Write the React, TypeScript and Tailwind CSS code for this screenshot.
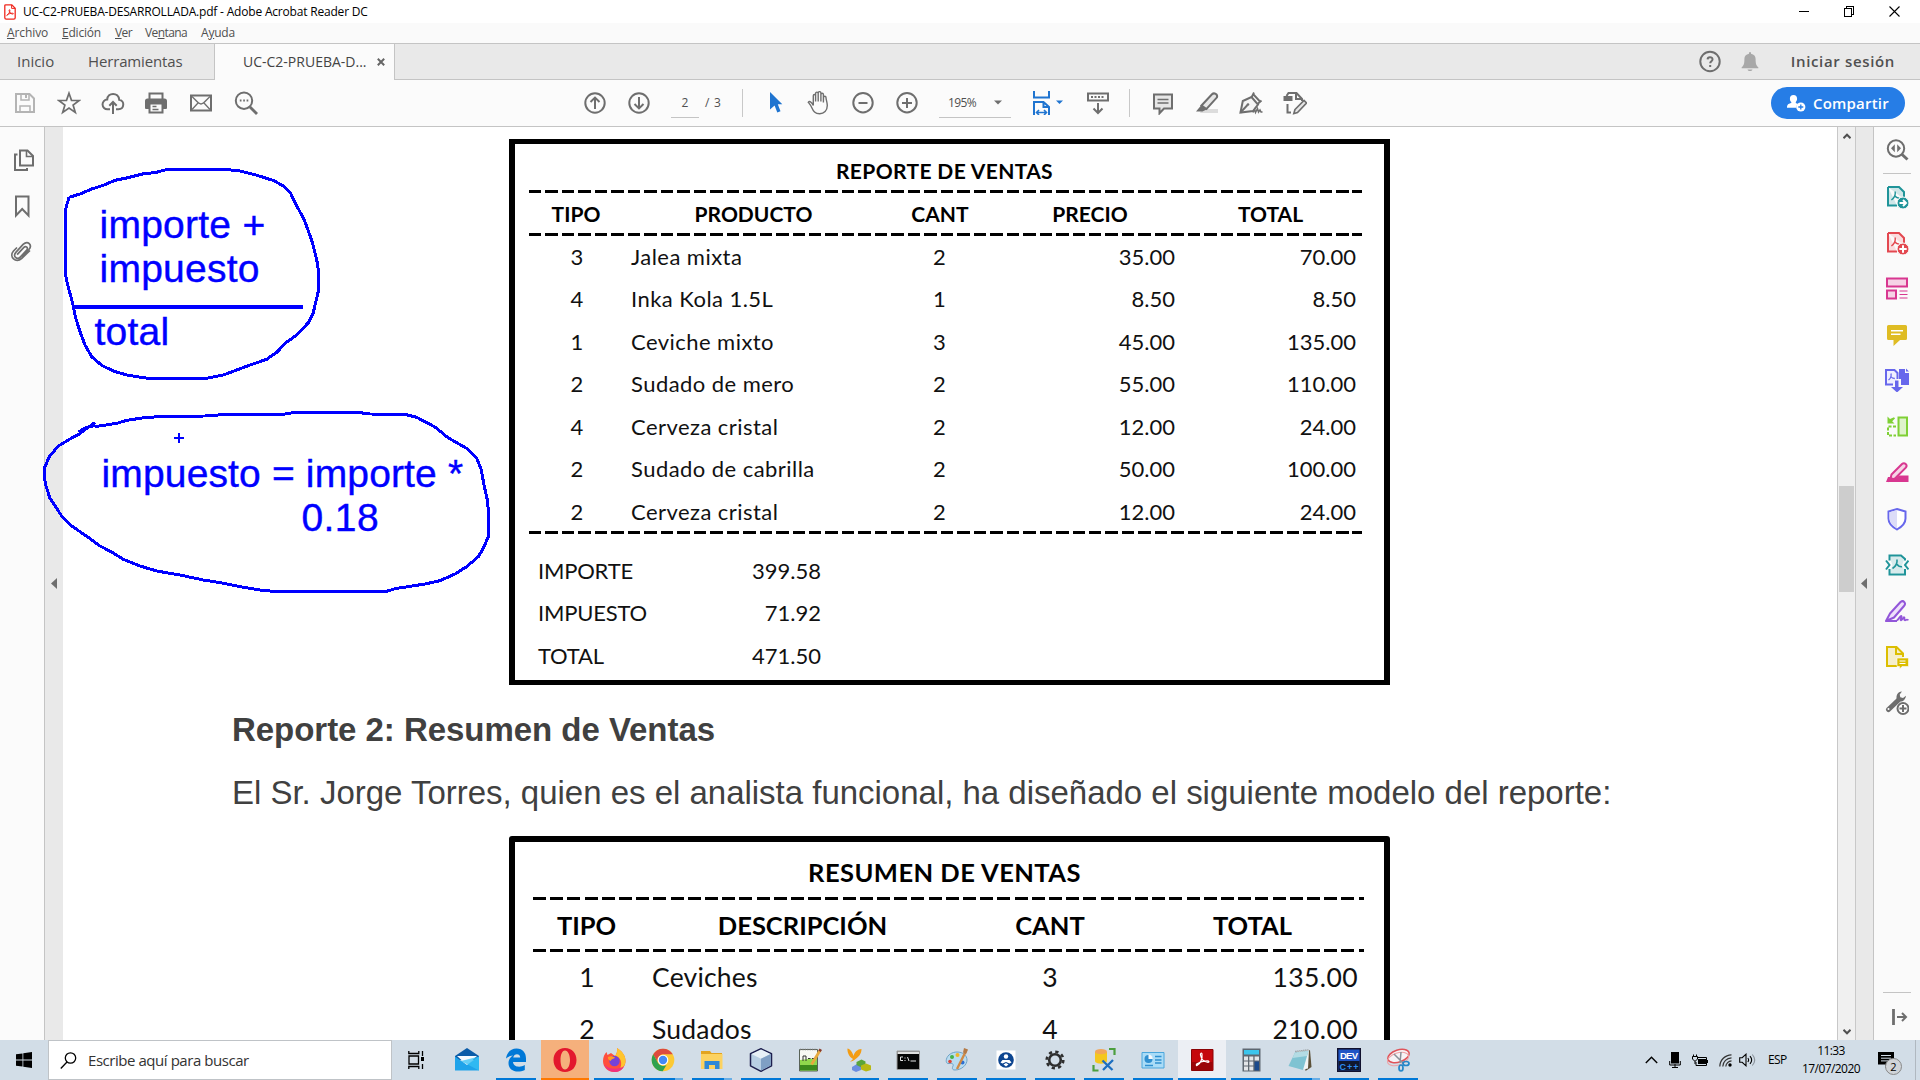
import type { ReactNode } from "react";

const GREY = "#6e6e6e";

function Svg({ w = 24, h = 24, children, className = "" }: { w?: number; h?: number; children: ReactNode; className?: string }) {
  return (
    <svg width={w} height={h} viewBox={`0 0 ${w} ${h}`} fill="none" stroke={GREY} strokeWidth={2} className={`shrink-0 ${className}`}>
      {children}
    </svg>
  );
}

/* ---------- Title and menu ---------- */

function AcrobatFileIcon() {
  return (
    <svg width="12" height="16" viewBox="0 0 12 16" fill="none" className="shrink-0">
      <path d="M1.7.8h6.1l3.4 3.5v9.4a1.4 1.4 0 0 1-1.4 1.4H2.2a1.4 1.4 0 0 1-1.4-1.4V1.7a.9.9 0 0 1 .9-.9Z" fill="#fff" stroke="#f0281e" strokeWidth="1.3" />
      <path d="M7.6 1v3.4H11" stroke="#f0281e" strokeWidth="1" />
      <path d="M3 11.2c1.6-.9 3-3.1 2.9-5 0-.8-.9-.6-.8.2.2 1.9 1.800 3.500 3.600 3.700 1 .1 1-.9-.2-.9-2 0-3.900.7-5.300 1.700-.5.400-.8.900-.2.300Z" stroke="#f0281e" strokeWidth="1" />
    </svg>
  );
}

function TitleBar() {
  return (
    <header className="flex h-[23px] items-center bg-white pl-1">
      <AcrobatFileIcon />
      <span className="ml-[7px] mt-px text-xs leading-4 tracking-[-0.19px] text-black">UC-C2-PRUEBA-DESARROLLADA.pdf - Adobe Acrobat Reader DC</span>
      <div className="ml-auto mr-[20px] flex items-center gap-[35px]">
        <svg width="10" height="11" viewBox="0 0 10 11" stroke="#000" shapeRendering="crispEdges"><path d="M0 5.500h10" /></svg>
        <svg width="10" height="11" viewBox="0 0 10 11" fill="none" stroke="#000" shapeRendering="crispEdges"><path d="M.5 2.500h7v8h-7zM2.500 2.500v-2h7v8h-2" /></svg>
        <svg width="11" height="11" viewBox="0 0 11 11" stroke="#000" strokeWidth="1.100"><path d="M.5.5l10 10M10.500.5l-10 10" /></svg>
      </div>
    </header>
  );
}

function MenuBar() {
  return (
    <nav className="flex h-[20px] items-center bg-[#fafafa] pl-[7px] text-xs leading-4 text-[#505050]">
      <span className="w-[55px] tracking-[-0.1px]"><u>A</u>rchivo</span>
      <span className="w-[53px] tracking-[-0.2px]"><u>E</u>dición</span>
      <span className="w-[30px] tracking-[-0.6px]"><u>V</u>er</span>
      <span className="w-[56px] tracking-[-0.6px]">Ve<u>n</u>tana</span>
      <span className="tracking-[-0.2px]">A<u>y</u>uda</span>
    </nav>
  );
}

function TabBar() {
  return (
    <div className="flex h-[37px] border-t border-[#c4c4c4] bg-[#e9e9e9] text-[15px] text-[#505050]">
      <div className="flex w-[215px] items-center border-b border-r border-[#c4c4c4] pl-[17px]">
        <span className="w-[71px]">Inicio</span>
        <span className="tracking-[-0.15px]">Herramientas</span>
      </div>
      <div className="flex w-[180px] items-center border-r border-[#c4c4c4] bg-[#fbfbfb] pl-[28px]">
        <span className="text-sm text-[#444]">UC-C2-PRUEBA-D...</span>
        <svg width="8" height="8" viewBox="0 0 8 8" stroke="#666" strokeWidth="2" className="ml-[10px]"><path d="M.8.8l6.400 6.400M7.200.8L.8 7.200" /></svg>
      </div>
      <div className="flex flex-1 items-center justify-end border-b border-[#c4c4c4] pr-[25px]">
        <Svg w={24} h={24} className="mr-[19px]">
          <circle cx="12" cy="11.500" r="9.700" />
          <path d="M9.600 9.400c.1-2.900 5-2.800 4.900.1 0 1.700-2.300 1.800-2.300 3.700M12.200 15.100v2" />
        </Svg>
        <svg width="18" height="21" viewBox="0 0 18 21" fill="#a8a8a8" className="mr-[32px]">
          <path d="M8 1.200h2v1.500c3 .5 4.600 2.500 4.600 5.300 0 5 .8 6.700 2.800 8.500v.8H.6v-.8C2.600 14.700 3.400 13 3.400 8 3.400 5.200 5 3.200 8 2.700ZM6.500 18.500h5c-.4 1-1.300 1.600-2.500 1.600s-2.100-.6-2.500-1.600Z" />
        </svg>
        <span className="font-semibold tracking-[0.65px]">Iniciar sesión</span>
      </div>
    </div>
  );
}

/* ---------- Toolbar ---------- */

function Tool({ children }: { children: ReactNode }) {
  return <div className="flex w-11 shrink-0 items-center justify-center">{children}</div>;
}

function Toolbar() {
  return (
    <div className="flex h-[47px] items-center border-b border-[#c4c4c4] bg-[#fbfbfb] pl-[3px] text-xs text-[#505050]">
      <Tool>
        <Svg>
          <path d="M3 3h13.500L21 7.500V21H3Z" stroke="#b4b4b4" />
          <path d="M8 3v6h8V3M7 21v-6h10v6" stroke="#b4b4b4" strokeWidth="1.500" />
          <path d="M13 4v3" stroke="#b4b4b4" />
        </Svg>
      </Tool>
      <Tool>
        <Svg><path d="M12 2.200l2.500 7.100 7.700.2-6.100 4.600 2.200 7.300-6.300-4.300-6.300 4.300 2.200-7.300L1.800 9.500l7.700-.2Z" strokeWidth="1.700" /></Svg>
      </Tool>
      <Tool>
        <Svg>
          <path d="M9 18.200H6.500a4.800 4.800 0 0 1-.3-9.600c.2-7.600 11.500-7.700 12 .2 5.700.6 5.400 9.400-.8 9.400H15" />
          <path d="M12 23V11.500M8.300 14.800L12 11l3.700 3.800" />
        </Svg>
      </Tool>
      <Tool>
        <Svg className="-ml-[2px]">
          <path d="M5.500 8V2.500h13V8" />
          <path d="M1 10a2.500 2.500 0 0 1 2.500-2.500h17A2.500 2.500 0 0 1 23 10v7a1 1 0 0 1-1 1h-3v-5H5v5H2a1 1 0 0 1-1-1Z" fill={GREY} stroke="none" />
          <path d="M5.500 12.500h13v9h-13Z" fill="#fbfbfb" />
          <path d="M8.500 15.500h4M8.500 18.500h6" strokeWidth="1.300" />
        </Svg>
      </Tool>
      <Tool>
        <Svg>
          <path d="M2 4.500h20v15H2Z" />
          <path d="M3 5.500c3 2.500 6 7.500 9 7.500s6-5 9-7.500M3 18.500l6-6.500M21 18.500l-6-6.500" strokeWidth="1.300" />
        </Svg>
      </Tool>
      <Tool>
        <Svg className="ml-[1px]">
          <circle cx="10" cy="9.700" r="8.200" />
          <path d="M16 16l7 7" strokeWidth="2.800" />
          <path d="M5.800 9.500h1.700M9.200 9.500h1.700M12.600 9.500h1.700" strokeWidth="1.800" />
        </Svg>
      </Tool>

      <div className="ml-[306px] flex items-center">
        <Tool><Svg><circle cx="12" cy="12" r="9.700" /><path d="M12 18V7M7.500 11L12 6.600l4.500 4.400" /></Svg></Tool>
        <Tool><Svg><circle cx="12" cy="12" r="9.700" /><path d="M12 6v11M7.500 13l4.500 4.400 4.500-4.400" /></Svg></Tool>
        <span className="ml-[10px] mt-[1px] h-[28px] w-[28px] border-b border-[#c4c4c4] text-center leading-[26px]">2</span>
        <span className="ml-[6px] w-[18px] whitespace-pre tracking-[0.7px]">/ 3</span>
        <span className="ml-[19px] h-[28px] w-px bg-[#c8c8c8]" />
      </div>

      <div className="ml-[10px] flex items-center">
        <Tool>
          <svg width="14" height="22" viewBox="0 0 14 22" fill="#1f74d0" className="ml-[2px]"><path d="M1 0l12.300 12.300H8.800l2.700 7-3.200 1.200-2.700-7L1 17.500Z" /></svg>
        </Tool>
        <Tool>
          <Svg className="-ml-[2px]">
            <path d="M6.300 15V5.200c0-1.700 2.300-1.700 2.300 0V11V3c0-1.800 2.600-1.800 2.600 0v8V2.500c0-1.800 2.700-1.800 2.700 0V11V4c0-1.700 2.500-1.700 2.500 0v8l.1-5c0-1.600 2.500-1.600 2.500 0 0 2.500 1.300 4.500 1.300 8 0 5-3.300 8.300-7.600 8.300-4.800 0-6.300-2.500-8-6.300C3.700 14.700 2 12.700 1.300 11.800c.9-1.700 3.300-.7 5 3.200" strokeWidth="1.400" transform="translate(1 -.5)" />
          </Svg>
        </Tool>
        <Tool><Svg><circle cx="12" cy="11.700" r="9.700" /><path d="M7.500 12h9" /></Svg></Tool>
        <Tool><Svg><circle cx="12" cy="11.700" r="9.700" /><path d="M7 12h10M12 7v10" /></Svg></Tool>
        <div className="ml-[10px] mt-[1px] flex h-[28px] w-[72px] items-center border-b border-[#c4c4c4] pb-px pl-[9px]">
          <span className="tracking-[-0.6px]">195%</span>
          <svg width="8" height="5" viewBox="0 0 8 5" fill="#6e6e6e" className="ml-[18px]"><path d="M0 .5h8l-4 4Z" /></svg>
        </div>
        <svg width="32" height="24" viewBox="0 0 32 24" fill="none" stroke="#1f74d0" strokeWidth="2" className="ml-[21px]">
          <path d="M2 0v6.500h15V0" />
          <path d="M2 24V11h9.500L17 16v8M11.500 11v5H17" />
          <path d="M4.500 21.500h10M7 19l-2.500 2.500L7 24M12 19l2.500 2.500L12 24" strokeWidth="1.600" />
          <path d="M24 9.500h7L27.500 13Z" fill="#1f74d0" stroke="none" />
        </svg>
        <div className="ml-[12px]">
          <Tool>
            <Svg>
              <path d="M2 2.500h20v7H2Z" />
              <path d="M5 6h14" strokeDasharray="2 1.500" strokeWidth="1.800" />
              <path d="M12 12v10M7.500 17.500l4.500 4.500 4.500-4.500" />
            </Svg>
          </Tool>
        </div>
        <span className="ml-[9px] mr-[11px] h-[28px] w-px bg-[#c8c8c8]" />
        <Tool>
          <Svg>
            <path d="M3 3.500h18v14H13l-4.500 4.800V17.500H3Z" fill="#e6e6e6" />
            <path d="M6.500 8.500h11M6.500 12h11" strokeWidth="1.300" />
          </Svg>
        </Tool>
        <Tool>
          <Svg>
            <path d="M7 18h16v4H5Z" fill="#dcdcdc" stroke="none" />
            <path d="M6.500 14.500L17 3.300c2-2 6-.3 5 3L11.500 18Z" fill="#e6e6e6" />
            <path d="M6 14.500l5.500 4-4 2H1Z" fill={GREY} stroke="none" />
          </Svg>
        </Tool>
        <Tool>
          <Svg>
            <path d="M1.500 21.500L3.800 10 12.500 6l6.500 7.500-5 6.500Z" fill="#f4f4f4" />
            <path d="M12.500 6.500L15 1.500M18.500 13l4-3.500M14.500 3.500L20.500 10M1.500 21.500l7-7.500" strokeWidth="1.900" />
            <circle cx="9" cy="13.500" r="1.300" fill={GREY} stroke="none" />
            <path d="M14 21.500l1.500-3 1 3 2-4 1 3.500 1.500-2 1 2h1.500" strokeWidth="1.500" />
          </Svg>
        </Tool>
        <Tool>
          <Svg>
            <path d="M3.500 5l2-3h8L19 8v2M13 2v6h6M4.500 13v8.500H8" />
            <path d="M.5 5h9v5h-9Z" fill={GREY} stroke="none" />
            <path d="M12 18.500l9-9 2.500 2.500-9 9.500-3.700 1Z" fill="#e6e6e6" strokeWidth="1.600" />
          </Svg>
        </Tool>
      </div>

      <button className="mb-px ml-auto mr-[15px] flex h-8 w-[134px] items-center rounded-full bg-[#267de6] pl-4 text-white">
        <svg width="19" height="18" viewBox="0 0 19 18" fill="#fff">
          <path d="M6.500 1c2.400 0 3.600 1.500 3.600 3.700 0 1.500-.5 2.400-1.300 3.200v1.200l2 .9a5 5 0 0 0-1.500 3.800H0c0-3 1-3.800 4.300-4.700V8c-.9-.8-1.400-1.800-1.400-3.300C2.900 2.500 4.100 1 6.500 1Z" />
          <circle cx="13.800" cy="13" r="4.600" />
          <path d="M13.800 10.500v5M11.300 13h5" stroke="#267de6" strokeWidth="1.300" />
        </svg>
        <span className="ml-[7px] text-[15px] font-semibold tracking-[0.2px]">Compartir</span>
      </button>
    </div>
  );
}

/* ---------- Document ---------- */

function Dashes({ className }: { className: string }) {
  return <div className={`h-[3px] shrink-0 ${className}`} />;
}

const DASH_1 = "w-[833px] bg-[repeating-linear-gradient(90deg,#000_0_12.5px,transparent_12.5px_16.47px)]";
const DASH_2 = "w-[831px] bg-[repeating-linear-gradient(90deg,#000_0_13px,transparent_13px_17.2px)]";
const COLS_1 = "grid grid-cols-[94px_261px_111px_190px_171px] items-center";
const COLS_2 = "grid grid-cols-[107px_325px_170px_235px] items-center";

const sales = [
  ["3", "Jalea mixta", "2", "35.00", "70.00"],
  ["4", "Inka Kola 1.5L", "1", "8.50", "8.50"],
  ["1", "Ceviche mixto", "3", "45.00", "135.00"],
  ["2", "Sudado de mero", "2", "55.00", "110.00"],
  ["4", "Cerveza cristal", "2", "12.00", "24.00"],
  ["2", "Sudado de cabrilla", "2", "50.00", "100.00"],
  ["2", "Cerveza cristal", "2", "12.00", "24.00"],
];
const totals = [["IMPORTE", "399.58"], ["IMPUESTO", "71.92"], ["TOTAL", "471.50"]];
const summary = [["1", "Ceviches", "3", "135.00"], ["2", "Sudados", "4", "210.00"]];

function SalesReport() {
  return (
    <section className="ml-[446px] mt-3 flex h-[546px] w-[881px] shrink-0 flex-col border-x-[6px] border-y-[5px] border-black pl-[14px] font-[Lato,sans-serif] text-[22px] leading-none text-[#111]">
      <h2 className="flex h-[46px] w-[831px] items-center justify-center pt-[7px] text-[21px] font-bold tracking-[0.36px] text-black">REPORTE DE VENTAS</h2>
      <Dashes className={DASH_1} />
      <div className={`${COLS_1} h-10 text-center text-[21px] font-bold text-black`}>
        <span>TIPO</span><span>PRODUCTO</span><span className="pl-px">CANT</span><span>PRECIO</span><span>TOTAL</span>
      </div>
      <Dashes className={DASH_1} />
      {sales.map(([tipo, producto, cant, precio, total], i) => (
        <div key={i} className={`${COLS_1} h-[42.5px] shrink-0 pb-[1.5px]`}>
          <span className="pl-[2px] text-center">{tipo}</span>
          <span className="pl-[8px] tracking-[0.45px]">{producto}</span>
          <span className="text-center">{cant}</span>
          <span className="pr-[10px] text-right">{precio}</span>
          <span className="text-right">{total}</span>
        </div>
      ))}
      <Dashes className={`${DASH_1} -mt-[3px]`} />
      <div className="mt-[17px]">
        {totals.map(([label, value]) => (
          <div key={label} className="flex h-[42.5px] w-[292px] items-center justify-between pb-[2.5px] pl-[9px]">
            <span className="tracking-[-0.2px]">{label}</span>
            <span>{value}</span>
          </div>
        ))}
      </div>
    </section>
  );
}

function SummaryReport() {
  return (
    <section className="ml-[446px] mt-[25px] flex h-[400px] w-[881px] shrink-0 flex-col rounded-t-[3px] border-[6px] border-black pl-[18px] font-[Lato,sans-serif] text-[26.5px] leading-none text-[#111]">
      <h2 className="flex h-[55px] w-[823px] items-center justify-center pt-[7px] text-[25.5px] font-bold tracking-[0.46px] text-black">RESUMEN DE VENTAS</h2>
      <Dashes className={DASH_2} />
      <div className={`${COLS_2} h-[49px] pt-[3px] text-center text-[25.5px] font-bold text-black`}>
        <span>TIPO</span><span>DESCRIPCIÓN</span><span>CANT</span><span>TOTAL</span>
      </div>
      <Dashes className={DASH_2} />
      {summary.map(([tipo, desc, cant, total]) => (
        <div key={tipo} className={`${COLS_2} h-[51.5px] shrink-0 pb-px`}>
          <span className="pl-px text-center">{tipo}</span>
          <span className="pl-[12px] tracking-[0.2px]">{desc}</span>
          <span className="text-center">{cant}</span>
          <span className="pr-[12px] text-right tracking-[0.4px]">{total}</span>
        </div>
      ))}
    </section>
  );
}

/* Pen strokes and typed notes drawn freely over the page. */
function Annotations() {
  return (
    <div className="pointer-events-none absolute left-0 top-[140px] h-[480px] w-[520px] font-['Liberation_Sans',Arial,sans-serif] text-[39px] leading-[44px] text-[#0000ff] [-webkit-text-stroke:0.4px_#0000ff]">
      <svg width="520" height="480" viewBox="0 0 1560 1440" fill="none" stroke="#0000ff" strokeWidth="9" strokeLinejoin="round" shapeRendering="crispEdges" className="absolute left-0 top-0">
        <path d="M207 172L240 162 275 147 310 136 345 121 380 114 432 101 465 98 502 88H670L715 92 765 104 822 122 850 138 872 160 885 188 912 238 935 300 950 358 956 395V450L945 495 940 518 925 548 890 585 858 608 830 637 800 658 750 675 710 690 670 705 625 714H437L385 706 342 694 305 676 275 650 255 615 240 575 226 530 218 490 203 435 197 405V207L207 172" />
        <path d="M220 500.500H909" strokeWidth="13" />
        <path d="M285 860L350 850 380 841 440 832 505 829 615 828 680 823 855 822 880 818H1080L1110 822 1215 823 1250 832 1305 861 1345 894 1400 925 1430 955 1444 990 1452 1035 1462 1080 1466 1120V1188L1450 1225 1435 1250 1400 1280 1365 1302 1320 1322 1275 1332 1185 1346 1160 1354H818L780 1350 720 1340 660 1328 610 1320 540 1305 470 1293 420 1278 370 1258 335 1236 300 1218 262 1190 215 1158 185 1128 150 1075 137 1035 133 1010V985L148 950 175 918 215 894 235 884 285 847" />
        <path d="M235 876L262 862 285 856" strokeWidth="10" />
        <path d="M537 879v30M522 894h30" strokeWidth="5" />
      </svg>
      <p className="absolute left-[99.500px] top-[63px] w-[180px] tracking-[0.25px]">importe + impuesto</p>
      <p className="absolute left-[94.500px] top-[170px] tracking-[0.25px]">total</p>
      <p className="absolute left-[101.500px] top-[312px] whitespace-nowrap tracking-[0.15px]">impuesto = importe *</p>
      <p className="absolute left-[301.500px] top-[356px] tracking-[0.4px]">0.18</p>
    </div>
  );
}

/* ---------- Side panes ---------- */

function LeftPane() {
  return (
    <aside className="flex w-[63px] shrink-0">
      <div className="flex w-[45px] flex-col items-center gap-[22px] border-r border-[#c4c4c4] bg-[#fbfbfb] pt-[21px]">
        <Svg className="ml-[3px]">
          <path d="M8 2.500h7.500L21 8v9.500H8Z" /><path d="M14.500 3v5.500H21" strokeWidth="1.600" /><path d="M5.500 6.500H3v15.500h12v-2" />
        </Svg>
        <Svg className="ml-[2px]"><path d="M5 2.500h12.500v19L11.200 15 5 21.500Z" /></Svg>
        <Svg className="mt-[-1px]">
          <path d="M7 14.500l7-7c2-2 4.800.6 2.800 2.700l-6.500 6.600c-3.500 3.500-8.300-.8-4.500-4.700l7.500-7.600c5-4.300 9.700 1 5.500 5.500l-6.700 6.800" strokeWidth="1.700" transform="rotate(-2 12 12) translate(0 1)" />
          <path d="M7 8.500L3.500 12c-5 6 2.500 12.500 8 7.500L20 11.500" strokeWidth="1.700" />
        </Svg>
      </div>
      <div className="flex w-[18px] items-center justify-center bg-[#e9e9e9]">
        <svg width="6" height="11" viewBox="0 0 6 11" fill={GREY}><path d="M6 0v11L0 5.500Z" /></svg>
      </div>
    </aside>
  );
}

function ScrollBar() {
  return (
    <div className="flex w-[19px] shrink-0 flex-col items-center border-x border-[#c8c8c8] bg-[#f0f0f0] pt-[6px]">
      <svg width="8" height="6" viewBox="0 0 8 6" fill="none" stroke="#505050" strokeWidth="2"><path d="M.5 5.200L4 1.700l3.500 3.500" /></svg>
      <div className="mt-[347px] h-[106px] w-[15px] bg-[#cdcdcd]" />
      <svg width="8" height="6" viewBox="0 0 8 6" fill="none" stroke="#505050" strokeWidth="2" className="mb-[5px] mt-auto"><path d="M.5.8L4 4.300 7.500.8" /></svg>
    </div>
  );
}

function PdfBadge({ color, fill, children }: { color: string; fill: string; children: ReactNode }) {
  return (
    <Svg>
      <path d="M3 2h11l5 5v7M12 20.500H3V2" fill={fill} stroke={color} />
      <path d="M10.200 6.500c.5 3.500-1.200 6.500-3.800 8.500M9.800 10.500c1 2 2.500 2.500 4.500 2.600" stroke={color} strokeWidth="1.400" />
      <circle cx="18" cy="18" r="6" fill={color} stroke="#fbfbfb" strokeWidth="1" />
      {children}
    </Svg>
  );
}

function RightPane() {
  return (
    <aside className="flex w-[64px] shrink-0">
      <div className="flex w-[18px] items-center justify-center border-r border-[#c4c4c4] bg-[#e9e9e9]">
        <svg width="6" height="11" viewBox="0 0 6 11" fill={GREY} className="-ml-[2px]"><path d="M6 0v11L0 5.500Z" /></svg>
      </div>
      <div className="flex flex-1 flex-col items-center gap-[22px] bg-[#fafafa] pt-[11px]">
        <Svg>
          <circle cx="11" cy="10.500" r="8.200" /><path d="M16.500 16l6 5.500" strokeWidth="3" />
          <path d="M9.800 6.200v8L6 10.200ZM12.200 6.200v8l3.800-4Z" fill={GREY} stroke="none" />
        </Svg>
        <div className="-mb-[22px] -mt-[11px] h-[12px] w-[28px] border-t border-[#c4c4c4]" />
        <PdfBadge color="#1f9499" fill="#cfe6e8"><path d="M14.500 18h6M18 15l3 3-3 3" stroke="#fff" strokeWidth="1.900" /></PdfBadge>
        <PdfBadge color="#e34850" fill="#fadcde"><path d="M14.300 18h7.400M18 14.300v7.400" stroke="#fff" /></PdfBadge>
        <Svg className="-mt-px mb-px">
          <path d="M2 2.500h20v8H2ZM2 14.500h9v8H2Z" fill="#f6d3e6" stroke="#d83790" />
          <path d="M14.500 15h8M14.500 18.500h8M14.500 22h8" stroke="#d83790" strokeWidth="1.200" />
        </Svg>
        <Svg>
          <path d="M3.500 2h17a1.500 1.500 0 0 1 1.500 1.500v12a1.500 1.500 0 0 1-1.500 1.500H15l-6.500 6v-6h-5A1.500 1.500 0 0 1 2 15.500v-12A1.500 1.500 0 0 1 3.500 2Z" fill="#dfbc23" stroke="none" />
          <path d="M6 7.800h12M6 11.300h9.500" stroke="#fff" strokeWidth="1.600" />
        </Svg>
        <Svg className="-mt-px mb-px">
          <path d="M8 16.500H1V2h8.500l3 3v6" stroke="#6767ec" fill="#f0f0ff" />
          <path d="M6 5.500c.6 3-.5 5-2.500 6.500M5.800 8.500c1 1.500 2 2 4 2" stroke="#6767ec" strokeWidth="1.300" />
          <path d="M14 1h6v4h4v12h-8V11h-2Z" fill="#6767ec" stroke="none" />
          <path d="M21 .5L24 3.500h-3Z" fill="#6767ec" stroke="none" />
          <path d="M10 12.500h3.500V19h4.500l-6 5.500L6 19h4Z" fill="#6767ec" stroke="none" />
        </Svg>
        <Svg>
          <path d="M13.500 2.500H22v18h-8.500Z" fill="#def3cb" stroke="#7fd035" />
          <path d="M11 11.500H3v9h8" stroke="#7fd035" strokeDasharray="3 1.500" />
          <path d="M2.500 1.500v7h7l-2.300-2.300L10 3.500 9 2.200 5 4Z" fill="#7fd035" stroke="none" />
        </Svg>
        <Svg>
          <path d="M6.500 13.500L17 3c2.500-2.200 6 1 3.800 3.700L10 17.500l-5 2Z" fill="#f6d3e6" stroke="#d83790" />
          <path d="M3 16h3l4 2 4-3.500h9.500V21H1Z" fill="#d83790" stroke="none" />
        </Svg>
        <Svg>
          <path d="M12 2L20.500 4.500v7c0 5-4 8.500-8.500 11-4.500-2.500-8.500-6-8.500-11v-7Z" fill="#fff" stroke="#6767ec" />
          <path d="M12 3L4.500 5.200v6.300c0 4.500 3.500 7.500 7.500 10Z" fill="#dcdcf8" stroke="none" />
        </Svg>
        <Svg>
          <path d="M5.500 7l2 5-2 5v3.500h13.500V17l-2-5 2-5-3-3.500H5.500Z" fill="#d7ebec" stroke="none" />
          <path d="M4.500 7.500V2.500H16L20 6v1.500M4.500 16v5.500H20V16" stroke="#1f9499" />
          <path d="M1 7.500l3.500 4.500L1 16.500M23.500 7.500L20 12l3.500 4.500" stroke="#1f9499" />
          <path d="M12 6.500c.5 4-1.500 7-4.500 9M12 11c1 2 2.500 3 5 2.800" stroke="#1f9499" strokeWidth="1.600" />
        </Svg>
        <Svg>
          <path d="M1 22l4-7.500L15.500 3c3-2.300 6 1.300 3.500 4L9 18.500 1 22H12" fill="#eee1fb" stroke="#9256d9" strokeLinejoin="round" />
          <path d="M12 21.500c2-2 3.500-5 4.500-4.500s-2 4-.5 4.300 2-3.500 3.200-3-.8 2.500.5 2.900 1-1.300 3.800-.2" stroke="#9256d9" strokeWidth="1.800" />
        </Svg>
        <Svg>
          <path d="M12 21H2V2h9.500L18 8.500V12" fill="#f5eecb" stroke="#dcbe00" />
          <path d="M11 2.500V9h6.500" stroke="#dcbe00" />
          <path d="M12 13h11.500v8.500H17L14.500 24v-2.500H12Z" fill="#dcbe00" stroke="#fbfbfb" strokeWidth=".6" />
          <path d="M14.500 16h6M14.500 18.500h6" stroke="#fff" strokeWidth="1" />
        </Svg>
        <Svg>
          <path d="M3.500 18.500L13 9.500" strokeWidth="5" strokeLinecap="round" />
          <path d="M17 .5c-4.500 0-7 5-4.500 9 3.500 2.800 8 0 8.500-4.700L18 7l-2.700-.8-.6-2.700Z" fill={GREY} stroke="none" />
          <circle cx="3.500" cy="18" r="1" fill="#fff" stroke="none" />
          <circle cx="18" cy="17.500" r="5.500" fill="#fff" />
          <path d="M14.500 17.500h7M18 14v7" />
        </Svg>
        <div className="mb-[14px] mt-auto flex h-[34px] w-[28px] items-end border-t border-[#c4c4c4]">
          <svg width="16" height="18" viewBox="0 0 16 18" fill="none" stroke={GREY} strokeWidth="2" className="ml-[9px]">
            <path d="M1.500 1v16" strokeWidth="2.800" /><path d="M5 9h9M10 5l4 4-4 4" />
          </svg>
        </div>
      </div>
    </aside>
  );
}

/* ---------- Taskbar ---------- */

type AppState = "none" | "open" | "multi" | "alert" | "active";

function AppButton({ state = "open", children }: { state?: AppState; children: ReactNode }) {
  const bg = state === "alert" ? "bg-[#f5b07c]" : state === "active" ? "bg-[#eceff4]" : "";
  const bar = state === "alert" ? "w-full bg-[#ff7800]" : state === "active" ? "w-full bg-[#0078d7]" : state === "none" ? "" : "w-10 bg-[#0078d7]";
  return (
    <div className={`mr-px flex h-10 w-12 shrink-0 flex-col items-center ${bg}`}>
      <div className="flex h-[38px] items-center pt-[1px]">{children}</div>
      <div className={`flex h-[2px] justify-end ${bar}`}>{state === "multi" && <div className="w-2 bg-[#68aee6]" />}</div>
    </div>
  );
}

function App24({ children }: { children: ReactNode }) {
  return <svg width="24" height="24" viewBox="0 0 24 24" fill="none">{children}</svg>;
}

function Taskbar() {
  return (
    <footer className="relative flex h-10 shrink-0 bg-[#d2dde7] text-black">
      <div className="flex w-12 items-center justify-center">
        <svg width="16" height="16" viewBox="0 0 16 16"><path d="M0 2.300L6.500 1.400v6.200H0ZM7.300 1.300L16 0v7.600H7.300ZM0 8.400h6.500v6.200L0 13.700ZM7.300 8.400H16V16l-8.700-1.300Z" /></svg>
      </div>
      <div className="flex w-[344px] items-center border border-[#bfc3c7] bg-white pl-[11px]">
        <svg width="17" height="17" viewBox="0 0 17 17" fill="none" stroke="#000" strokeWidth="1.300"><circle cx="10.500" cy="6" r="5.200" /><path d="M7 10L.8 16.500" /></svg>
        <span className="ml-[11px] text-[15px] tracking-[-0.45px] text-[#333]">Escribe aquí para buscar</span>
      </div>
      <div className="flex w-[51px] items-center justify-center pr-[4px]">
        <svg width="16" height="18" viewBox="0 0 16 18" fill="none" stroke="#000" strokeWidth="1.300"><path d="M1 5h9.500v8H1ZM.8 0v2.500h10V0M.8 18v-2.500h10V18M14.500 0v5M14.500 13v5" /><path d="M14.500 6v4" strokeWidth="3" /></svg>
      </div>
      <AppButton state="none">
        <App24><path d="M0 8L12 0l12 8v4H0Z" fill="#0a5ba8" /><path d="M2 8h20l-10 9Z" fill="#f6fbff" /><path d="M0 8.500L12 17 24 8.500V22.500H0Z" fill="#1fa3ea" /><path d="M24 8.500V22.500L6 13Z" fill="#35c0f4" opacity=".75" /></App24>
      </AppButton>
      <AppButton>
        <App24><path d="M2 10.500C3 4 7 .5 12.500.5 19 .5 22 5 22 10.500V14H9c.3 5 7 6 11.800 3v5C13 25.500 4.500 23 4.500 15c0-3.500 2-6 4.500-7.500C5.500 8 3.500 9 2 10.500ZM9.200 9.500h7c0-4.500-6.300-4.500-7 0Z" fill="#0078d7" /></App24>
      </AppButton>
      <AppButton state="alert">
        <App24><path fillRule="evenodd" d="M12 0c7 0 11.500 5 11.500 12S19 24 12 24 .5 19 .5 12 5 0 12 0Zm0 2.500C9 2.500 7.500 7 7.500 12S9 21.500 12 21.500s5-4.500 5-9.500-2-9.500-5-9.500Z" fill="#e3182d" /></App24>
      </AppButton>
      <AppButton>
        <App24><path d="M15 0c4.500 3 8.500 7 8.500 13A11 11 0 0 1 12.500 24C6 24 1 19.500 1 13c0-4 1.500-7 3.500-9l1 3L9 5l4 3c1.500-2 2.500-4 2-8Z" fill="#ff4f3c" /><path d="M15 0c5 3 8.500 7 8.500 13 0 4-3 8-6 9.500C21 15 19 9 13 8c1.500-2 2.500-4 2-8Z" fill="#ffc52e" /><path d="M2 16c2 5 6 8 10.500 8 4 0 8-2 9.500-6-5 4-15 4-20-2Z" fill="#f0327e" /><circle cx="12.500" cy="13" r="5.200" fill="#7542d8" /><path d="M6 9c3-1.500 5-.5 7 .5-1 2-4 1-4 3.500C6.500 12 5.500 10.500 6 9Z" fill="#ff9a24" /></App24>
      </AppButton>
      <AppButton state="multi">
        <App24><circle cx="12" cy="12" r="11.300" fill="#fcc934" /><path d="M2.200 6.300A11.300 11.300 0 0 1 21.800 6.300H12A6 6 0 0 0 7 15Z" fill="#dd4b3e" /><path d="M2.200 6.300L7 15a6 6 0 0 0 8.500 2l-3.800 6.300A11.300 11.300 0 0 1 2.200 6.300Z" fill="#2fa24f" /><circle cx="12" cy="12" r="5.300" fill="#fff" /><circle cx="12" cy="12" r="4.200" fill="#4489f4" /></App24>
      </AppButton>
      <AppButton state="multi">
        <App24><path d="M1 3h9l1.500 2H22v16H1Z" fill="#e3a420" /><path d="M1 6h21.500v15H1Z" fill="#fcd261" /><path d="M4.500 21v-8h15v8h-4.500v-4H9v4Z" fill="#2f88d6" /></App24>
      </AppButton>
      <AppButton>
        <App24><path d="M12 .8l10.500 5v12L12 23.300 1.500 17.800v-12Z" fill="#b8cfe4" stroke="#1d1f4e" strokeWidth="1.500" strokeLinejoin="round" /><path d="M12 1.500l9.500 4.500L12 10.800 2.500 6Z" fill="#e7f0f7" /><path d="M12 10.800L21.700 6v11.500L12 22.500Z" fill="#7f9fc4" /></App24>
      </AppButton>
      <AppButton>
        <App24><path d="M1.500 1.500h18v21.500h-18Z" fill="#f7f8f4" stroke="#596257" /><path d="M2 12l17-2v12.500H2Z" fill="#8fd84c" /><path d="M2 17h17v5.500H2Z" fill="#3b8a1c" /><path d="M2 1.500h17" stroke="#777" strokeWidth="1.600" strokeDasharray="1.200 1.200" /><path d="M5 13V8h3v5M10 10.500h2.500M14 10.500h2" stroke="#333" /><path d="M22 2.500L13.500 16.500" stroke="#e7a93e" strokeWidth="2.800" /><path d="M22.800 1.200L21.500 3.300" stroke="#8a3a2a" strokeWidth="2.800" /></App24>
      </AppButton>
      <AppButton>
        <App24><path d="M6 11C2 9 0 4 .5.5 3 1 5.500 4 6.500 8c1-4 4-7 8-7 0 5-3 8-6 10-1.500 1.500-3 2-5.500 3Z" fill="#f39c14" /><path d="M5 19l5-3 4 2v4l-5 2-4-2Z" fill="#6b8de0" /><path d="M9.500 14l5-2.500 4 2V17l-5 2-4-2Z" fill="#5aa53a" /><path d="M14 17.500l5-2 5 2V22l-5 1.500-5-2Z" fill="#b8b815" /></App24>
      </AppButton>
      <AppButton>
        <App24><path d="M1 3h22.500v18.500H1Z" fill="#060606" stroke="#9a9a9a" /><path d="M1.500 3.500h21.500V6H1.500Z" fill="#e0e0e0" /><path d="M7 9h-2.500v3.500H7M9 9.500v1M9 12v1M11.500 9l1.500 4M14.500 13H20" stroke="#e8e8e8" strokeWidth="1" /></App24>
      </AppButton>
      <AppButton>
        <App24><path d="M12 4c6 0 10 3.500 10 8s-5 10-12 10c-3 0-3-2-2-4s-1-3-4-2.500S1 13 1.500 11C2.500 7 7 4 12 4Z" fill="#b9dcf0" stroke="#6fa3c7" /><circle cx="7" cy="9" r="2" fill="#45b24a" /><circle cx="12.500" cy="7" r="2" fill="#efb62a" /><circle cx="5" cy="13.500" r="1.800" fill="#dc4437" /><circle cx="17.500" cy="14.500" r="2" fill="#2d6fd2" /><path d="M21.500 2L12 21" stroke="#d08a45" strokeWidth="2.400" /><path d="M19 0l4 1.500L21 6l-3-1.500Z" fill="#b47a46" /></App24>
      </AppButton>
      <AppButton>
        <App24><path d="M2.500 2.500h19v19h-19Z" fill="#fff" /><circle cx="12" cy="12" r="7.800" fill="#0d4590" /><circle cx="12" cy="8.500" r="2.200" fill="#fff" /><path d="M8.500 12h7l2 2.500-2 1L12 14l-3.500 1.500-2-1ZM9.500 16.500L12 15l2.500 1.500-2.500 2Z" fill="#fff" /></App24>
      </AppButton>
      <AppButton>
        <App24><circle cx="12" cy="12" r="5.800" stroke="#2e2e2e" strokeWidth="2.600" /><circle cx="12" cy="12" r="8.300" stroke="#2e2e2e" strokeWidth="2.600" strokeDasharray="3.260 3.260" /></App24>
      </AppButton>
      <AppButton>
        <App24><path d="M3 4v9c0 3.500 12 3.500 12 0V4Z" fill="#f4c71e" /><ellipse cx="9" cy="3.700" rx="6" ry="2.600" fill="#f1a65a" /><path d="M17 1h5.500v6M6.500 22.500H1.500V17" stroke="#4c9f3f" strokeWidth="2.200" /><path d="M10.500 12.500l10 9.500M21 12l-10 10" stroke="#1d6fc0" strokeWidth="2.300" /></App24>
      </AppButton>
      <AppButton>
        <App24><path d="M1 4.500h22v15.500H1Z" fill="#aadcf7" stroke="#4aa6dc" /><circle cx="7.500" cy="11" r="4" fill="#2f8fd0" /><path d="M7.500 11V6.500a4.500 4.500 0 0 1 4.400 4.500Z" fill="#f6f9fc" /><path d="M14 8.500h6.500M14 12h6.500M14 15h6.500M4 17.500h8" stroke="#2f8fd0" strokeWidth="1.500" /></App24>
      </AppButton>
      <AppButton state="active">
        <App24><path d="M1.500 1.500h21.500v21H1.500Z" fill="#c5080c" stroke="#8b0305" /><path d="M2 14h20.500v8H2Z" fill="#9b0407" /><path d="M7 17.500c4-2.500 5.500-7 5-11.500-.2-1.500-2-1-1.500 1C11.300 11.500 14.500 14 18 14.300c1.500.1 1.200-1.300-.5-1.400-4-.1-7.500 1-10.500 2.900-1 .8-.8 2 0 1.700Z" stroke="#fff" strokeWidth="1.200" /></App24>
      </AppButton>
      <AppButton>
        <App24><path d="M3.500.5h18v23h-18Z" fill="#5e6770" /><path d="M5 2h15v4.500H5Z" fill="#3cc5ec" /><path d="M5 8.500h4v4H5ZM10.300 8.500h4v4h-4ZM5 13.500h4v4H5ZM10.300 13.500h4v4h-4ZM5 18.500h4v4H5ZM10.300 18.500h4v4h-4ZM15.600 8.500h4.400v4h-4.400Z" fill="#e3e6e9" /><path d="M15.600 13.500H20v9h-4.400Z" fill="#1b4a8c" /></App24>
      </AppButton>
      <AppButton state="multi">
        <App24><path d="M16 5l6-3 1.500 17-6 4Z" fill="#5c5139" /><path d="M8 3L21 1.500l-1 19-5 1Z" fill="#f1f4f4" /><path d="M7 4.500L20.500 3 15 22 .5 18Z" fill="#7fc3d2" /><path d="M7 4.500L20.500 3l-1.500 5L4.500 10Z" fill="#b4dce4" /><path d="M7.500 3.500l13-1.500" stroke="#6b7478" strokeDasharray="1 1" strokeWidth="1.500" /></App24>
      </AppButton>
      <AppButton>
        <App24><path d="M.7.700h22.600v22.600H.7Z" fill="#1f55c5" stroke="#11112e" strokeWidth="1.400" /><path d="M1.500 13h21v9.500h-21Z" fill="#10182e" /><text x="12" y="11" textAnchor="middle" fontSize="9.500" fontWeight="700" fill="#fff" fontFamily="Liberation Sans" textLength="18">DEV</text><text x="12" y="21.500" textAnchor="middle" fontSize="9" fontWeight="700" fill="#2d8cf0" fontFamily="Liberation Sans" textLength="19">C++</text></App24>
      </AppButton>
      <AppButton>
        <App24><ellipse cx="12.500" cy="8" rx="11" ry="6" fill="#f6f3f5" stroke="#e0545a" strokeWidth="1.500" transform="rotate(-18 12.500 8)" /><ellipse cx="12" cy="11" rx="11" ry="6" stroke="#eda3a6" transform="rotate(-18 12 11)" /><path d="M8 6l9 9M15 4l-1 11" stroke="#8b9098" strokeWidth="1.500" /><ellipse cx="20" cy="15.500" rx="3" ry="2" stroke="#2486c8" strokeWidth="1.700" /><ellipse cx="15" cy="20" rx="2" ry="3" stroke="#2486c8" strokeWidth="1.700" /></App24>
      </AppButton>

      <div className="ml-auto flex items-center text-xs leading-4">
        <svg width="13" height="8" viewBox="0 0 13 8" fill="none" stroke="#000" strokeWidth="1.400" className="mr-[11px]"><path d="M.8 7l5.700-5.700L12.200 7" /></svg>
        <svg width="12" height="16" viewBox="0 0 12 16" fill="none" stroke="#000" className="mr-[11px]"><path d="M2 0h8v11.500H2Z" fill="#000" stroke="none" /><path d="M.7 9v4h10.600V9M6 12v3.500M3 15.500h6" /></svg>
        <svg width="16" height="13" viewBox="0 0 16 13" fill="none" stroke="#000" className="mr-[11px]"><path d="M5.500 3.500h9v8H4V8M15.500 6v3" /><path d="M6 5h8v5H6Z" fill="#000" stroke="none" /><path d="M1.500.5v2M4.500.5v2M.5 2.500h5v2.500L3.500 7h-1L.5 5ZM3 7v3" /></svg>
        <svg width="13" height="13" viewBox="0 0 13 13" fill="none" stroke="#333" strokeWidth="1.200" className="mr-[7px]"><path d="M.8 12.500C1 6 6 1 12.500.8M3.800 12.500c.2-5 4-8.500 8.700-8.700M6.800 12.500c.2-3 2.700-5.500 5.700-5.700" /><circle cx="11" cy="11" r="1.700" fill="#000" stroke="none" /></svg>
        <svg width="17" height="14" viewBox="0 0 17 14" fill="none" stroke="#000" strokeWidth="1.100" className="mr-[12px]"><path d="M.7 4.700h2.500L7 1.200v11.600L3.200 9.300H.7ZM8.800 5c1 1.200 1 2.800 0 4M11 3.200c2 2.300 2 5.300 0 7.600" /><path d="M13.300 1.500c3 3.400 3 7.600 0 11" stroke="#8b929a" /></svg>
        <span className="w-[34px] tracking-[-0.6px]">ESP</span>
        <div className="flex w-[58px] flex-col items-center whitespace-nowrap leading-[18px] tracking-[-0.58px]">
          <span>11:33</span>
          <span>17/07/2020</span>
        </div>
        <div className="relative ml-[18px] mr-[13px] h-[26px] w-[24px]">
          <svg width="16" height="16" viewBox="0 0 16 16" className="mt-[5px]"><path d="M0 0h16v12.500h-5L7.500 16v-3.500H0Z" /><path d="M3 3.500h10M3 6.200h10M3 8.900h7" stroke="#d2dde7" /></svg>
          <span className="absolute left-[7px] top-[11px] flex h-[17px] w-[17px] items-center justify-center rounded-full border border-[#888] bg-[#d0d4d8] text-[11px] font-medium">2</span>
        </div>
        <span className="mr-1 h-10 w-px bg-[#b0b8c0]" />
      </div>
    </footer>
  );
}

export default function App() {
  return (
    <div className="relative flex h-[1080px] w-[1920px] flex-col overflow-hidden bg-white font-['Open_Sans','Noto_Sans',sans-serif]">
      <TitleBar />
      <MenuBar />
      <TabBar />
      <Toolbar />
      <div className="flex min-h-0 flex-1">
        <LeftPane />
        <main className="flex min-w-0 flex-1 flex-col overflow-hidden bg-white">
          <SalesReport />
          <h1 className="ml-[169px] mt-[26px] shrink-0 font-['Liberation_Sans',Arial,sans-serif] text-[33px] font-bold leading-[38px] tracking-[-0.04px] text-[#404040]">Reporte 2: Resumen de Ventas</h1>
          <p className="ml-[169px] mt-[25px] shrink-0 whitespace-nowrap font-['Liberation_Sans',Arial,sans-serif] text-[33px] leading-[38px] tracking-[-0.015px] text-[#404040]">El Sr. Jorge Torres, quien es el analista funcional, ha diseñado el siguiente modelo del reporte:</p>
          <div className="-mt-px flex shrink-0 flex-col">
            <SummaryReport />
          </div>
        </main>
        <ScrollBar />
        <RightPane />
      </div>
      <Annotations />
      <Taskbar />
    </div>
  );
}
